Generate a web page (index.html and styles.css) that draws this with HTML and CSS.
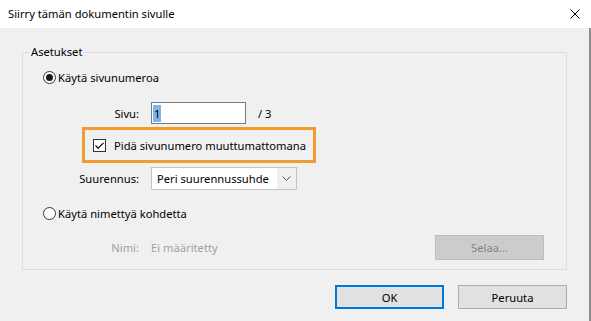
FILE: index.html
```html
<!DOCTYPE html>
<html lang="fi">
<head>
<meta charset="utf-8">
<title>Siirry tämän dokumentin sivulle</title>
<link rel="stylesheet" href="styles.css">
</head>
<body>
<div class="window">
  <div class="titlebar">
    <span class="title">Siirry tämän dokumentin sivulle</span>
    <svg class="close" width="10" height="10" viewBox="0 0 10 10"><path d="M0.5 0.5 L9.5 9.5 M9.5 0.5 L0.5 9.5" stroke="#000" stroke-width="1"/></svg>
  </div>
  <div class="client">
    <fieldset class="group">
      <legend class="legend">Asetukset</legend>
      <div class="radio-row">
        <span class="radio checked"><span class="dot"></span></span>
        <span>Käytä sivunumeroa</span>
      </div>
      <div class="field-row page-row">
        <span class="lbl">Sivu:</span>
        <div class="input"><span class="selected">1</span></div>
        <span class="of">/ 3</span>
      </div>
      <div class="highlight">
        <span class="checkbox">
          <svg width="11" height="11" viewBox="0 0 11 11"><path d="M1.5 5.5 L4.2 8.2 L9.5 2.8" fill="none" stroke="#000" stroke-width="1.1"/></svg>
        </span>
        <span>Pidä sivunumero muuttumattomana</span>
      </div>
      <div class="field-row zoom-row">
        <span class="lbl">Suurennus:</span>
        <div class="select">
          <span class="select-text">Peri suurennussuhde</span>
          <span class="arrow"><svg width="9" height="5" viewBox="0 0 9 5"><path d="M0.5 0.5 L4.5 4.5 L8.5 0.5" fill="none" stroke="#555" stroke-width="1"/></svg></span>
        </div>
      </div>
      <div class="radio-row second">
        <span class="radio"></span>
        <span>Käytä nimettyä kohdetta</span>
      </div>
      <div class="field-row name-row">
        <span class="lbl dim">Nimi:</span>
        <span class="dim">Ei määritetty</span>
        <button class="btn disabled">Selaa...</button>
      </div>
    </fieldset>
    <div class="buttons">
      <button class="btn default">OK</button>
      <button class="btn">Peruuta</button>
    </div>
  </div>
</div>
</body>
</html>
```

FILE: styles.css
```css
* { box-sizing: border-box; }
html, body { margin: 0; padding: 0; }
body {
  background: #f0f0f0;
  font-family: "Noto Sans", "Open Sans", sans-serif;
  font-size: 11.2px;
  color: #000;
  width: 591px;
  height: 321px;
  overflow: hidden;
  white-space: nowrap;
}
.window { width: 591px; height: 321px; display: flex; flex-direction: column; }
.titlebar {
  height: 28px;
  background: #fff;
  display: flex;
  align-items: center;
  padding-left: 8px;
  padding-right: 11px;
}
.title { flex: 1; line-height: 16px; }
.close { display: block; }
.client {
  flex: 1;
  background: #f0f0f0;
  border-right: 2px solid #8d8d8d;
  padding: 16px 22px 0 22px;
}
.group {
  margin: 0;
  padding: 0 22px 9px 0;
  border: 1px solid #dcdcdc;
  min-width: 0;
}
.legend {
  margin-left: 6px;
  padding: 0 2px;
  line-height: 16px;
}
.radio-row {
  display: flex;
  align-items: center;
  height: 20px;
  margin-top: 7px;
  padding-left: 20px;
  gap: 2px;
}
.radio-row.second { margin-top: 13px; }
.radio {
  width: 13px; height: 13px;
  border: 1px solid #333;
  border-radius: 50%;
  background: #fff;
  display: flex;
  align-items: center;
  justify-content: center;
  flex: none;
}
.dot { width: 7px; height: 7px; border-radius: 50%; background: #1a1a1a; }
.field-row { display: flex; align-items: center; }
.lbl { width: 128px; text-align: right; padding-right: 12px; flex: none; }
.page-row { margin-top: 15px; height: 22px; }
.input {
  width: 95px; height: 22px;
  background: #fff;
  border: 1px solid #7a7a7a;
  padding: 1px 1px;
  display: flex;
  align-items: center;
}
.selected { background: #7cb6e6; line-height: 17px; padding: 0 1px; }
.of { margin-left: 12px; }
.highlight {
  margin-top: 3px;
  margin-left: 59px;
  width: 234px;
  height: 36px;
  border: 3px solid #f29b30;
  display: flex;
  align-items: center;
  padding-left: 8px;
  gap: 8px;
}
.checkbox {
  width: 13px; height: 13px;
  border: 1px solid #333;
  background: #fff;
  display: flex;
  align-items: center;
  justify-content: center;
  flex: none;
}
.checkbox svg { display: block; }
.zoom-row { margin-top: 4px; height: 23px; }
.select {
  width: 146px; height: 23px;
  border: 1px solid #c4c4c4;
  background: #fff;
  display: flex;
  align-items: center;
}
.select-text { flex: 1; padding-left: 5px; }
.arrow {
  width: 19px; height: 21px;
  background: #f0f0f0;
  display: flex; align-items: center; justify-content: center;
}
.arrow svg { display: block; }
.name-row { margin-top: 12px; height: 25px; }
.dim { color: #a0a0a0; }
.btn {
  font-family: inherit;
  font-size: 11.2px;
  width: 109px;
  height: 24px;
  background: #e1e1e1;
  border: 1px solid #adadad;
  color: #000;
  padding: 0;
  margin: 0;
}
.btn.disabled {
  margin-left: auto;
  height: 25px;
  background: #cccccc;
  border-color: #bfbfbf;
  color: #838383;
}
.btn.default { border: 2px solid #0078d7; }
.buttons {
  display: flex;
  justify-content: flex-end;
  gap: 14px;
  margin-top: 15px;
}
```
